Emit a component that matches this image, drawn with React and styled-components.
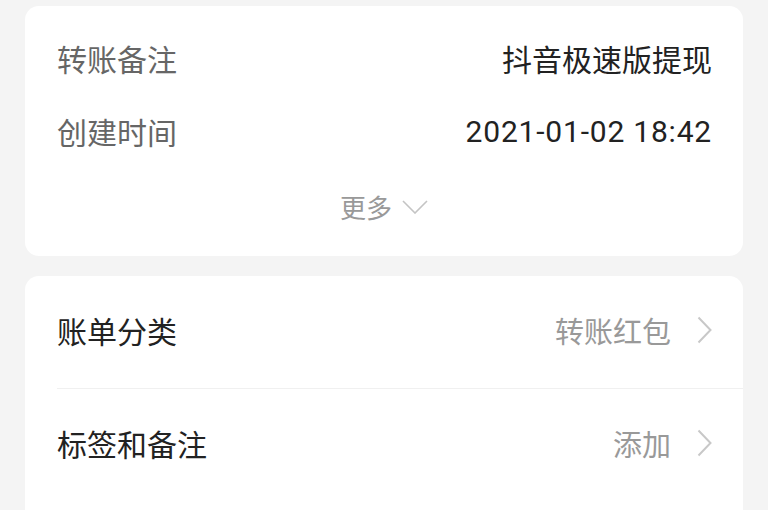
import React from "react";
import styled, { createGlobalStyle } from "styled-components";

const GlobalStyle = createGlobalStyle`
  html, body {
    margin: 0;
    padding: 0;
    background: #f4f4f4;
    font-family: "Noto Sans CJK SC", "Noto Sans", sans-serif;
  }
`;

const Page = styled.div`
  display: flex;
  flex-direction: column;
  gap: 20px;
  padding: 6px 25px 0;
  height: 510px;
  overflow: hidden;
  box-sizing: border-box;
`;

const Card = styled.div`
  background: #fff;
  border-radius: 14px;
  padding: ${props => props.pad || "0"};
  flex-shrink: 0;
  min-height: ${props => props.minH || "auto"};
`;

const InfoRow = styled.div`
  height: 73px;
  box-sizing: border-box;
  padding: 0 31px 5px 32px;
  display: flex;
  align-items: center;
  justify-content: space-between;
`;

const Label = styled.span`
  font-size: 30px;
  color: ${props => props.color || "#666"};
`;

const Value = styled.span`
  font-size: ${props => props.size || "30px"};
  color: ${props => props.color || "#222"};
  letter-spacing: ${props => (props.digits ? "0.8px" : "0")};
  font-family: ${props =>
    props.digits
      ? `"Roboto", "Noto Sans CJK SC", sans-serif`
      : `"Noto Sans CJK SC", sans-serif`};
`;

const MoreRow = styled.div`
  height: 77px;
  box-sizing: border-box;
  padding-bottom: 4px;
  display: flex;
  align-items: center;
  justify-content: center;
  gap: 10px;
  color: #999;
  font-size: 26px;
`;

const ListRow = styled.div`
  height: 113px;
  box-sizing: border-box;
  display: flex;
  align-items: center;
  justify-content: space-between;
  padding: 0 31px 5px ${props => (props.divider ? "0" : "32px")};
  margin-left: ${props => (props.divider ? "32px" : "0")};
  border-bottom: ${props => (props.divider ? "1px solid #f0f0f0" : "none")};
`;

const Extra = styled.div`
  display: flex;
  align-items: center;
  gap: 26px;
`;

const ChevronDown = () => (
  <svg width="26" height="14" viewBox="0 0 26 14" fill="none">
    <path d="M1 1 L13 13 L25 1" stroke="#c4c4c4" strokeWidth="1.6" />
  </svg>
);

const ChevronRight = () => (
  <svg width="15" height="28" viewBox="0 0 15 28" fill="none">
    <path d="M1.5 1.5 L13.5 14 L1.5 26.5" stroke="#c8c8c8" strokeWidth="2" />
  </svg>
);

function App() {
  return (
    <>
      <GlobalStyle />
      <Page>
        <Card pad="18px 0 9px">
          <InfoRow>
            <Label>转账备注</Label>
            <Value>抖音极速版提现</Value>
          </InfoRow>
          <InfoRow>
            <Label>创建时间</Label>
            <Value digits>2021-01-02 18:42</Value>
          </InfoRow>
          <MoreRow>
            <span>更多</span>
            <ChevronDown />
          </MoreRow>
        </Card>
        <Card minH="300px">
          <ListRow divider>
            <Label color="#222">账单分类</Label>
            <Extra>
              <Value color="#999" size="29px">
                转账红包
              </Value>
              <ChevronRight />
            </Extra>
          </ListRow>
          <ListRow>
            <Label color="#222">标签和备注</Label>
            <Extra>
              <Value color="#999" size="29px">
                添加
              </Value>
              <ChevronRight />
            </Extra>
          </ListRow>
        </Card>
      </Page>
    </>
  );
}

export default App;
